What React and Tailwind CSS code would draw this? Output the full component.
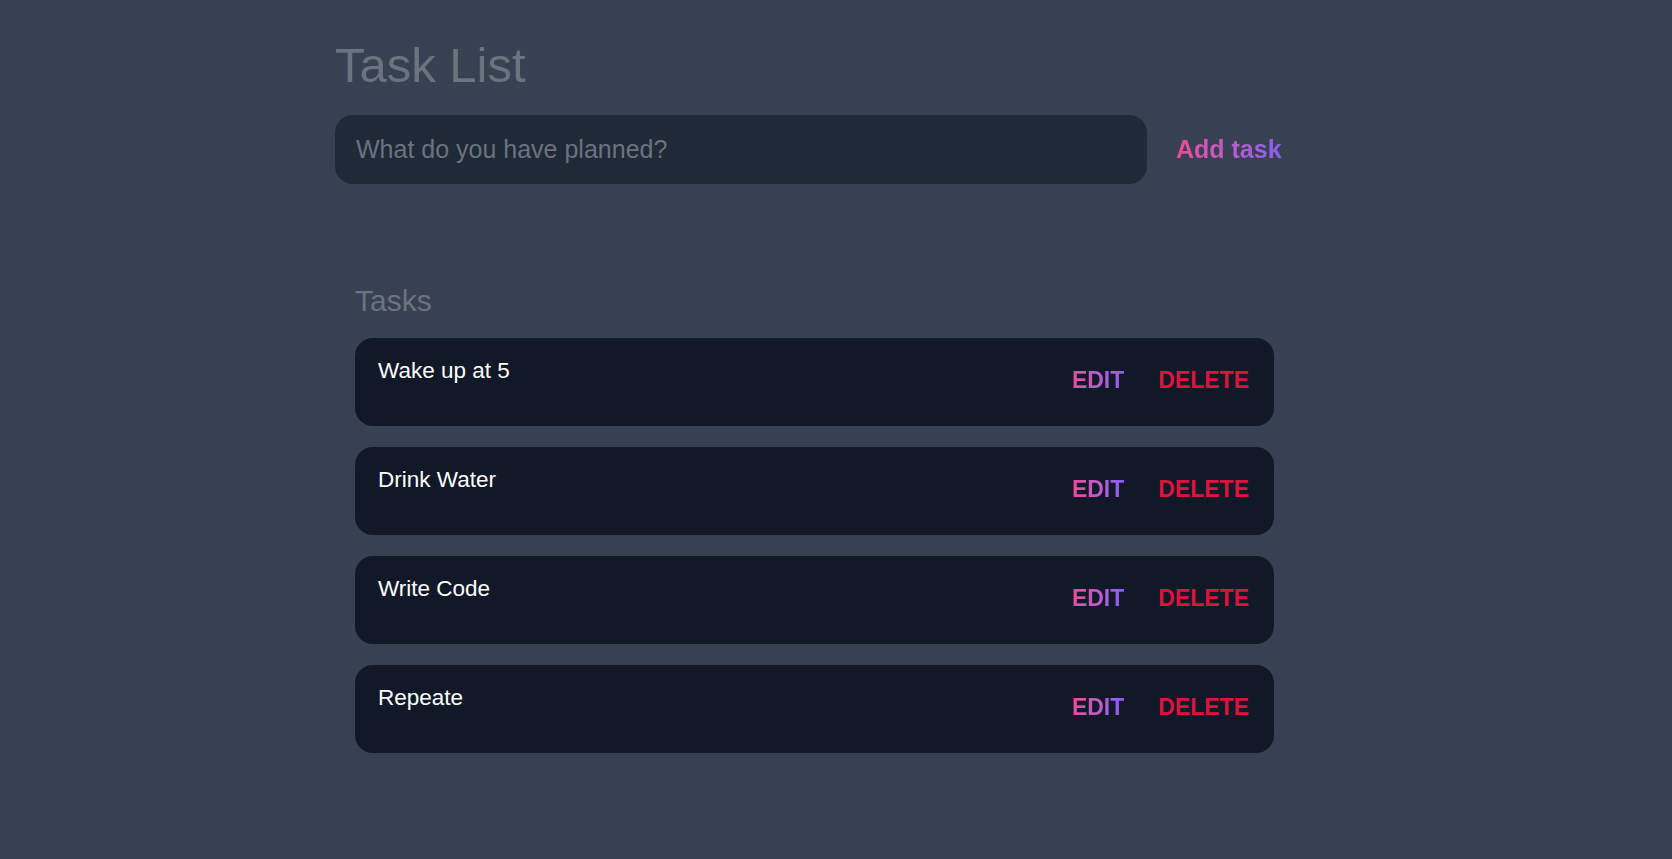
import React, { useState } from "react";

const initialTasks = [
  { id: 1, name: "Wake up at 5" },
  { id: 2, name: "Drink Water" },
  { id: 3, name: "Write Code" },
  { id: 4, name: "Repeate" },
];

const TaskItem = ({ task, onDelete }) => {
  return (
    <div className="flex h-[88px] items-start justify-between rounded-[18px] bg-[#111827] pl-[23px] pr-[25px] pt-4">
      <div className="text-[22.5px] text-white">{task.name}</div>
      <div className="mt-[9px] flex items-center gap-[34px]">
        <button className="bg-gradient-to-r from-[#ec4899] to-[#8b5cf6] bg-clip-text text-[23px] font-bold uppercase text-transparent">
          Edit
        </button>
        <button
          onClick={() => onDelete(task.id)}
          className="text-[23px] font-bold uppercase text-[#dc143c]"
        >
          Delete
        </button>
      </div>
    </div>
  );
};

export default function App() {
  const [tasks, setTasks] = useState(initialTasks);
  const [value, setValue] = useState("");

  const addTask = (e) => {
    e.preventDefault();
    if (!value.trim()) return;
    setTasks([...tasks, { id: Date.now(), name: value.trim() }]);
    setValue("");
  };

  const deleteTask = (id) => {
    setTasks(tasks.filter((t) => t.id !== id));
  };

  return (
    <div
      className="min-h-screen bg-[#374151]"
      style={{ fontFamily: '"Liberation Sans", Arial, sans-serif' }}
    >
      <div className="mx-auto w-[1002px] pt-[41px]">
        <h1 className="text-[49px] leading-none text-[#6b7280]">Task List</h1>

        <form onSubmit={addTask} className="mt-[25px] flex items-center gap-[29px]">
          <input
            type="text"
            value={value}
            onChange={(e) => setValue(e.target.value)}
            placeholder="What do you have planned?"
            className="h-[69px] w-[812px] rounded-[18px] bg-[#1f2937] pl-[21px] text-[25px] text-white outline-none placeholder:text-[#6b7280]"
          />
          <button
            type="submit"
            className="bg-gradient-to-r from-[#ec4899] to-[#8b5cf6] bg-clip-text text-[25px] font-bold text-transparent"
          >
            Add task
          </button>
        </form>

        <section className="mt-[94px] pl-[20px]">
          <h2 className="text-3xl leading-[45px] text-[#6b7280]">Tasks</h2>
          <div className="mt-[15px] flex w-[919px] flex-col gap-[21px]">
            {tasks.map((task) => (
              <TaskItem key={task.id} task={task} onDelete={deleteTask} />
            ))}
          </div>
        </section>
      </div>
    </div>
  );
}
